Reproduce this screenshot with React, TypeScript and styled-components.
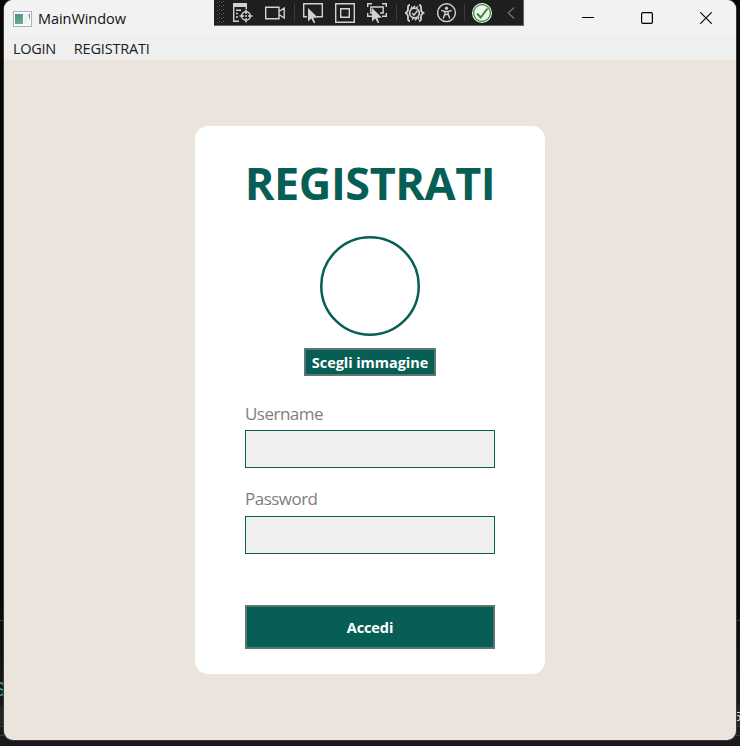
import React from "react";
import styled, { createGlobalStyle } from "styled-components";

const GlobalStyle = createGlobalStyle`
  * { box-sizing: border-box; }
  body { margin: 0; overflow: hidden; font-family: "Open Sans", "Noto Sans", sans-serif; }
`;

const Desktop = styled.div`
  position: relative;
  width: 740px;
  height: 746px;
  padding: 0 4px 6px;
  overflow: hidden;
  background: linear-gradient(#080707 0 600px, #171717 680px 705px, #242424 705px 726px, #1a1a1a 726px 736px, #1b191b 736px);
`;
const DesktopLine = styled.div<{ $top: number }>`
  position: absolute;
  left: 0;
  top: ${(p) => p.$top}px;
  width: 740px;
  height: 1px;
  background: #3b3b3b;
`;
const Behind = styled.span<{ $left: number; $top: number; $size: number; $color: string }>`
  position: absolute;
  left: ${(p) => p.$left}px;
  top: ${(p) => p.$top}px;
  font: ${(p) => p.$size}px/1 "Liberation Sans", sans-serif;
  color: ${(p) => p.$color};
`;
const Window = styled.div`
  position: relative;
  display: flex;
  flex-direction: column;
  width: 732px;
  height: 740px;
  border-radius: 9px;
  overflow: hidden;
  background: #ebe4dd;
  box-shadow: 0 0 0 1px #39393a;
`;
const TitleBar = styled.header`
  display: flex;
  align-items: center;
  height: 37px;
  flex: none;
  padding-left: 9px;
  background: #f2f2f2;
`;
const WindowTitle = styled.span`
  flex: 1;
  margin-left: 6px;
  font-size: 14.5px;
  letter-spacing: -0.06px;
  line-height: 20px;
  color: #111;
`;
const Caption = styled.div`
  display: flex;
  align-items: flex-start;
  height: 100%;
  margin-right: 1px;
`;
const CaptionButton = styled.div`
  display: flex;
  align-items: center;
  justify-content: center;
  width: 59px;
  height: 36px;
`;
const MenuBar = styled.nav`
  display: flex;
  align-items: center;
  gap: 18px;
  height: 23px;
  flex: none;
  padding-left: 9px;
  background: #efefef;
`;
const MenuItem = styled.span<{ $spacing: number }>`
  font-size: 14.5px;
  line-height: 20px;
  letter-spacing: ${(p) => p.$spacing}px;
  color: #212121;
`;
const DebugBar = styled.div`
  position: absolute;
  left: 210px;
  top: 0;
  display: flex;
  width: 310px;
  height: 26px;
  padding: 3px 0 0 3px;
  background: #1f1f1f;
  border: solid #626262;
  border-width: 0 1px 1px 0;
`;
const Grip = styled.svg`
  width: 8px;
  height: 22px;
  flex: none;
  margin: -2px 2px 0 0;
`;
const Tool = styled.svg`
  width: 20px;
  height: 20px;
  margin: 0 6px;
  flex: none;
  fill: none;
  stroke: #d2d2d2;
  stroke-width: 1.4;
`;
const Divider = styled.i<{ $tight?: boolean }>`
  width: 1px;
  height: 17px;
  margin: 1px ${(p) => (p.$tight ? "1px 0 1px" : "2px 0 3px")};
  flex: none;
  background: #3d3d3d;
`;
const Content = styled.main`
  display: flex;
  justify-content: center;
  align-items: flex-start;
  padding-top: 66px;
`;
const Card = styled.section`
  display: flex;
  flex-direction: column;
  align-items: center;
  width: 350px;
  height: 547.5px;
  padding: 26px 50px 0;
  border-radius: 13px;
  background: #fff;
`;
const Heading = styled.h1`
  margin: 0;
  height: 62px;
  font-size: 45px;
  line-height: 62px;
  font-weight: 700;
  letter-spacing: -0.45px;
  white-space: nowrap;
  color: #075e54;
`;
const Avatar = styled.svg`
  width: 100px;
  height: 100px;
  flex: none;
  margin-top: 22px;
  fill: none;
  stroke: #075e54;
  stroke-width: 2.5;
`;
const Button = styled.button<{ $wide?: boolean }>`
  display: flex;
  align-items: center;
  justify-content: center;
  width: ${(p) => (p.$wide ? 250 : 132)}px;
  height: ${(p) => (p.$wide ? 44 : 28)}px;
  margin: ${(p) => (p.$wide ? "51px" : "12px")} 0 0;
  padding: ${(p) => (p.$wide ? 2 : 1)}px 0 0;
  border: 1px solid #707070;
  box-shadow: inset 0 0 0 1px #467a73;
  background: #075e54;
  color: #fff;
  font: 700 14.5px/20px "Open Sans", sans-serif;
  letter-spacing: ${(p) => (p.$wide ? -0.1 : -0.06)}px;
  white-space: nowrap;
`;
const Field = styled.label<{ $first?: boolean }>`
  display: block;
  width: 250px;
  margin-top: ${(p) => (p.$first ? 26 : 19)}px;
`;
const FieldLabel = styled.span`
  display: block;
  height: 24px;
  line-height: 24px;
  font-size: 17px;
  letter-spacing: -0.52px;
  color: #808080;
`;
const Input = styled.input<{ $gap: number }>`
  display: block;
  width: 250px;
  height: 38px;
  margin-top: ${(p) => p.$gap}px;
  border: 1px solid #075e54;
  border-radius: 0;
  background: #efefef;
  outline: none;
`;

const pointer = "M5 5V18.5L8.2 15.4 10.8 20H12.2L10.4 14.7H15Z";

function DebugTools() {
  return (
    <DebugBar>
      <Grip viewBox="0 0 8 22">
        {[1, 5, 9, 13, 17, 21].map((y) => (
          <g key={y} fill="#5c5c5c">
            <rect x="0" y={y} width="1" height="1" />
            <rect x="4" y={y} width="1" height="1" />
            <rect x="2" y={y - 1} width="1" height="1" />
            <rect x="6" y={y - 1} width="1" height="1" />
          </g>
        ))}
      </Grip>
      <Tool viewBox="0 0 20 20">
        <path d="M0 0H14V4H0Z" fill="#d2d2d2" stroke="none" />
        <path d="M.7 3V18.3H6M13.3 3V6M3 7.2H8M3 10.5H5M3 14H5" />
        <circle cx="13" cy="13" r="4.3" />
        <path d="M13 6.5V11M13 15V19.5M6.5 13H11M15 13H19.5" />
        <circle cx="13" cy="13" r="1" fill="#d2d2d2" stroke="none" />
      </Tool>
      <Tool viewBox="0 0 20 20">
        <path d="M.7 4.2H14V15.8H.7ZM14 8.5 19.2 5V15L14 11.5" />
      </Tool>
      <Divider />
      <Tool viewBox="0 0 20 20">
        <path d="M4 13.8H.7V.7H19.3V13.8H14" />
        <path d={pointer} fill="#d2d2d2" stroke="none" />
      </Tool>
      <Tool viewBox="0 0 20 20">
        <path d="M.7 .7H19.3V19.3H.7ZM5.7 5.7H14.3V14.3H5.7Z" />
      </Tool>
      <Tool viewBox="0 0 20 20">
        <path d="M.7 4V.7H5M15 .7H19.3V4M.7 10V13.3H5M19.3 10V13.3H15M5 10H3.8V4H16.2V10H13" />
        <path d={pointer} fill="#d2d2d2" stroke="none" />
      </Tool>
      <Divider />
      <Tool viewBox="0 0 20 20">
        <path strokeWidth="1.8" d="M5 2C2.5 2 3 4 3 6.5S2 9 .5 10C2 11 3 11 3 13.5S2.5 18 5 18M14 2C16.5 2 16 4 16 6.5S17 9 18.5 10C17 11 16 11 16 13.5S16.5 18 14 18" />
        <circle cx="9.5" cy="10" r="4.8" strokeWidth="1.7" />
        <path d="M7 3.5 6 6M10 2.8 8 5M13 3.5 11 5M7 16.5 9 15M10 17.2 12 15M13 16.5 14 14M7.2 10 9 12.2 12.5 7.5" />
      </Tool>
      <Tool viewBox="0 0 20 20">
        <circle cx="9.5" cy="9.7" r="8.9" />
        <circle cx="9.5" cy="5.2" r="1.6" fill="#d2d2d2" stroke="none" />
        <path d="M4.3 7.4 7.9 8.6V11L6.2 15.4M14.7 7.4 11.1 8.6V11L12.8 15.4M7.7 8.5H11.3M7.9 11.5H11.1" />
      </Tool>
      <Divider $tight />
      <Tool viewBox="0 0 20 20">
        <circle cx="10" cy="10" r="10" fill="#f1f1f1" stroke="none" />
        <circle cx="10" cy="10" r="8.4" stroke="#289128" strokeWidth="1.2" />
        <path d="M5 10.5 8.7 14.5 15.5 5.5" stroke="#289128" strokeWidth="2" />
      </Tool>
      <Tool viewBox="0 0 20 20">
        <path d="M10.2 4.5 4.2 10 10.2 15.5" stroke="#737373" strokeWidth="1.2" />
      </Tool>
    </DebugBar>
  );
}

export default function App() {
  return (
    <Desktop>
      <GlobalStyle />
      <DesktopLine $top={620} />
      <DesktopLine $top={726} />
      <DesktopLine $top={735} />
      <Behind $left={-8} $top={678} $size={21} $color="#36a18b">S</Behind>
      <Behind $left={734} $top={710} $size={13} $color="#ddd">5</Behind>
      <Window>
        <TitleBar>
          <svg width="19" height="16" viewBox="0 0 19 16">
            <defs>
              <linearGradient id="pane" x1="0" y1="0" x2="0.5" y2="1">
                <stop stopColor="#4e83a5" />
                <stop offset="1" stopColor="#62b37f" />
              </linearGradient>
            </defs>
            <rect x=".5" y=".5" width="18" height="15" fill="#fafafa" stroke="#aeb2b8" />
            <path d="M2 3H10V13H2Z" fill="url(#pane)" />
            <path d="M11 3H15V13H11Z" fill="#f0f1f3" />
            <path d="M15.5 3H17V9H16.5Z" fill="url(#pane)" />
          </svg>
          <WindowTitle>MainWindow</WindowTitle>
          <Caption>
            <CaptionButton>
              <svg width="12" height="12"><path d="M0 5.5H12" stroke="#000" /></svg>
            </CaptionButton>
            <CaptionButton>
              <svg width="12" height="12"><rect x=".6" y=".6" width="10.8" height="10.8" rx="1.3" fill="none" stroke="#000" strokeWidth="1.2" /></svg>
            </CaptionButton>
            <CaptionButton>
              <svg width="12" height="12"><path d="M.3 .3 11.7 11.7M11.7 .3 .3 11.7" stroke="#000" strokeWidth="1.1" /></svg>
            </CaptionButton>
          </Caption>
        </TitleBar>
        <MenuBar>
          <MenuItem $spacing={-0.3}>LOGIN</MenuItem>
          <MenuItem $spacing={-0.2}>REGISTRATI</MenuItem>
        </MenuBar>
        <DebugTools />
        <Content>
          <Card>
            <Heading>REGISTRATI</Heading>
            <Avatar viewBox="0 0 100 100">
              <circle cx="50" cy="50" r="48.75" />
            </Avatar>
            <Button>Scegli immagine</Button>
            <Field $first>
              <FieldLabel>Username</FieldLabel>
              <Input $gap={4} />
            </Field>
            <Field>
              <FieldLabel>Password</FieldLabel>
              <Input $gap={5} type="password" />
            </Field>
            <Button $wide>Accedi</Button>
          </Card>
        </Content>
      </Window>
    </Desktop>
  );
}
